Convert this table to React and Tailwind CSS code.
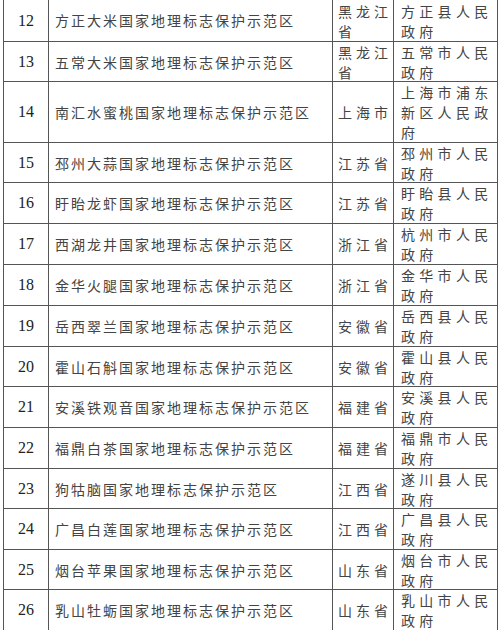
import React from "react";

const rows = [
  { n: "12", name: "方正大米国家地理标志保护示范区", prov: ["黑龙江", "省"], gov: ["方正县人民", "政府"], h: "h-[42px]" },
  { n: "13", name: "五常大米国家地理标志保护示范区", prov: ["黑龙江", "省"], gov: ["五常市人民", "政府"], h: "h-[40px]" },
  { n: "14", name: "南汇水蜜桃国家地理标志保护示范区", prov: ["上海市"], gov: ["上海市浦东", "新区人民政", "府"], h: "h-[61px]" },
  { n: "15", name: "邳州大蒜国家地理标志保护示范区", prov: ["江苏省"], gov: ["邳州市人民", "政府"], h: "h-[40px]" },
  { n: "16", name: "盱眙龙虾国家地理标志保护示范区", prov: ["江苏省"], gov: ["盱眙县人民", "政府"], h: "h-[41px]" },
  { n: "17", name: "西湖龙井国家地理标志保护示范区", prov: ["浙江省"], gov: ["杭州市人民", "政府"], h: "h-[41px]" },
  { n: "18", name: "金华火腿国家地理标志保护示范区", prov: ["浙江省"], gov: ["金华市人民", "政府"], h: "h-[41px]" },
  { n: "19", name: "岳西翠兰国家地理标志保护示范区", prov: ["安徽省"], gov: ["岳西县人民", "政府"], h: "h-[41px]" },
  { n: "20", name: "霍山石斛国家地理标志保护示范区", prov: ["安徽省"], gov: ["霍山县人民", "政府"], h: "h-[40px]" },
  { n: "21", name: "安溪铁观音国家地理标志保护示范区", prov: ["福建省"], gov: ["安溪县人民", "政府"], h: "h-[41px]" },
  { n: "22", name: "福鼎白茶国家地理标志保护示范区", prov: ["福建省"], gov: ["福鼎市人民", "政府"], h: "h-[41px]" },
  { n: "23", name: "狗牯脑国家地理标志保护示范区", prov: ["江西省"], gov: ["遂川县人民", "政府"], h: "h-[40px]" },
  { n: "24", name: "广昌白莲国家地理标志保护示范区", prov: ["江西省"], gov: ["广昌县人民", "政府"], h: "h-[41px]" },
  { n: "25", name: "烟台苹果国家地理标志保护示范区", prov: ["山东省"], gov: ["烟台市人民", "政府"], h: "h-[40px]" },
  { n: "26", name: "乳山牡蛎国家地理标志保护示范区", prov: ["山东省"], gov: ["乳山市人民", "政府"], h: "h-[40px]" },
];

const cjk = "font-['Noto_Sans_CJK_SC',sans-serif]";

export default function App() {
  return (
    <div className="w-[500px] h-[630px] overflow-hidden bg-white">
      <div className="ml-[3px] w-[495px] border-l border-[#555] box-border">
        {rows.map((r, i) => (
          <div
            key={r.n}
            className={`grid grid-cols-[45px_284px_61px_104px] ${r.h} ${i < rows.length - 1 ? "border-b border-[#555]" : ""} box-border`}
          >
            <div className="border-r border-[#555] flex items-center justify-center font-['Liberation_Serif',serif] text-[16px] text-[#222]">
              {r.n}
            </div>
            <div className={`border-r border-[#555] flex items-center pl-[6px] ${cjk} text-[14px] tracking-[2px] text-[#444] whitespace-nowrap`}>
              {r.name}
            </div>
            <div className={`border-r border-[#555] flex flex-col justify-center pl-[5px] ${cjk} text-[14px] tracking-[4px] leading-[20px] text-[#444] whitespace-nowrap`}>
              {r.prov.map((l) => (
                <span key={l}>{l}</span>
              ))}
            </div>
            <div className={`border-r border-[#555] flex flex-col justify-center pl-[7px] ${cjk} text-[14px] tracking-[4.3px] leading-[20px] text-[#444] whitespace-nowrap`}>
              {r.gov.map((l) => (
                <span key={l}>{l}</span>
              ))}
            </div>
          </div>
        ))}
      </div>
    </div>
  );
}
